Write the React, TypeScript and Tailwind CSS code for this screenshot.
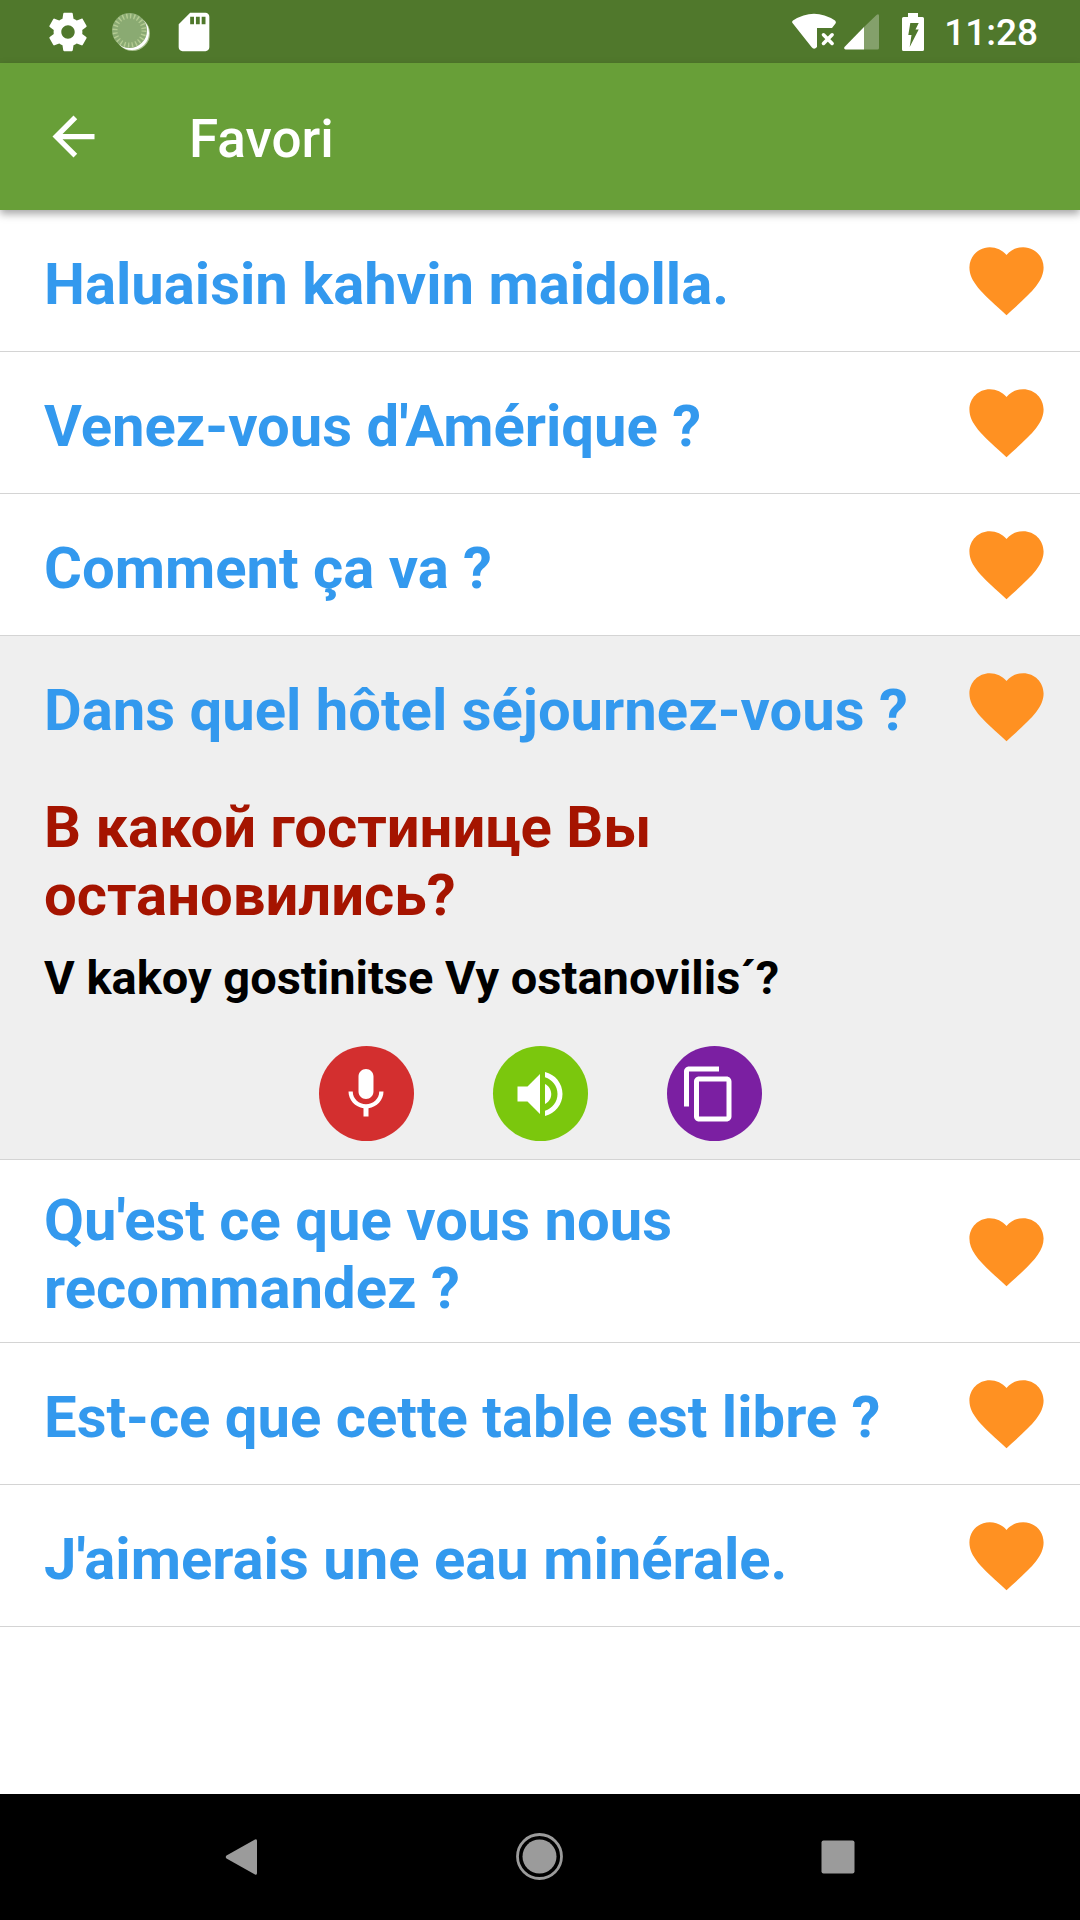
import { useState } from "react";
import type { ReactNode } from "react";

type Phrase = {
  id: number;
  text: string;
  translation?: string;
  pronunciation?: string;
};

const phrases: Phrase[] = [
  { id: 1, text: "Haluaisin kahvin maidolla." },
  { id: 2, text: "Venez-vous d'Amérique ?" },
  { id: 3, text: "Comment ça va ?" },
  {
    id: 4,
    text: "Dans quel hôtel séjournez-vous ?",
    translation: "В какой гостинице Вы остановились?",
    pronunciation: "V kakoy gostinitse Vy ostanovilis´?",
  },
  { id: 5, text: "Qu'est ce que vous nous recommandez ?" },
  { id: 6, text: "Est-ce que cette table est libre ?" },
  { id: 7, text: "J'aimerais une eau minérale." },
];

function Icon({ d, className, viewBox = "0 0 24 24" }: { d: string; className: string; viewBox?: string }) {
  return (
    <svg viewBox={viewBox} fill="currentColor" className={className} aria-hidden="true">
      <path d={d} />
    </svg>
  );
}

const paths = {
  gear: "M19.43 12.98c.04-.32.07-.64.07-.98s-.03-.66-.07-.98l2.11-1.65c.19-.15.24-.42.12-.64l-2-3.46c-.12-.22-.39-.3-.61-.22l-2.49 1c-.52-.4-1.08-.73-1.69-.98l-.38-2.65C14.46 2.18 14.25 2 14 2h-4c-.25 0-.46.18-.49.42l-.38 2.65c-.61.25-1.17.59-1.69.98l-2.49-1c-.23-.09-.49 0-.61.22l-2 3.46c-.13.22-.07.49.12.64l2.11 1.65c-.04.32-.07.65-.07.98s.03.66.07.98l-2.11 1.65c-.19.15-.24.42-.12.64l2 3.46c.12.22.39.3.61.22l2.49-1c.52.4 1.08.73 1.69.98l.38 2.65c.03.24.24.42.49.42h4c.25 0 .46-.18.49-.42l.38-2.65c.61-.25 1.17-.59 1.69-.98l2.49 1c.23.09.49 0 .61-.22l2-3.46c.12-.22.07-.49-.12-.64l-2.11-1.65zM12 15.5c-1.93 0-3.5-1.57-3.5-3.5s1.57-3.5 3.5-3.5 3.5 1.57 3.5 3.5-1.57 3.5-3.5 3.5z",
  sdCard: "M18 2h-8L4.02 8 4 20c0 1.1.9 2 2 2h12c1.1 0 2-.9 2-2V4c0-1.1-.9-2-2-2zm-6 6h-2V4h2v4zm3 0h-2V4h2v4zm3 0h-2V4h2v4z",
  back: "M20 11H7.83l5.59-5.59L12 4l-8 8 8 8 1.41-1.41L7.83 13H20v-2z",
  heart: "M12 21.35l-1.45-1.32C5.4 15.36 2 12.28 2 8.5 2 5.42 4.42 3 7.5 3c1.74 0 3.41.81 4.5 2.09C13.09 3.81 14.76 3 16.5 3 19.58 3 22 5.42 22 8.5c0 3.78-3.4 6.86-8.55 11.54L12 21.35z",
  mic: "M12 14c1.66 0 2.99-1.34 2.99-3L15 5c0-1.66-1.34-3-3-3S9 3.34 9 5v6c0 1.66 1.34 3 3 3zm5.3-3c0 3-2.54 5.1-5.3 5.1S6.7 14 6.7 11H5c0 3.41 2.72 6.23 6 6.72V21h2v-3.28c3.28-.48 6-3.3 6-6.72h-1.7z",
  volume: "M3 9v6h4l5 5V4L7 9H3zm13.5 3c0-1.77-1.02-3.29-2.5-4.03v8.05c1.48-.73 2.5-2.25 2.5-4.02zM14 3.23v2.06c2.89.86 5 3.54 5 6.71s-2.11 5.85-5 6.71v2.06c4.01-.91 7-4.49 7-8.77s-2.99-7.86-7-8.77z",
  copy: "M16 1H4c-1.1 0-2 .9-2 2v14h2V3h12V1zm3 4H8c-1.1 0-2 .9-2 2v14c0 1.1.9 2 2 2h11c1.1 0 2-.9 2-2V7c0-1.1-.9-2-2-2zm0 16H8V7h11v14z",
};

function Spinner() {
  return (
    <svg viewBox="0 0 46 46" className="size-[46px]" aria-hidden="true">
      <circle cx="24.5" cy="24.5" r="17.5" fill="#a9c08f" />
      <circle cx="23.8" cy="23.8" r="17.2" fill="#fff" />
      <circle cx="21.5" cy="21.5" r="17.5" fill="#8aaa72" />
      <circle cx="21.5" cy="21.5" r="14.5" fill="none" stroke="#b4cc92" strokeWidth="5" strokeDasharray="1.4 2.4" />
    </svg>
  );
}

function StatusBar() {
  return (
    <div className="flex h-[63px] items-center justify-between bg-[#50782c] pr-[42px] pl-[45px] text-white">
      <div className="flex gap-[17px]">
        <Icon d={paths.gear} className="size-[46px]" />
        <Spinner />
        <Icon d={paths.sdCard} className="size-[46px]" />
      </div>
      <div className="flex items-center">
        <svg viewBox="0 0 44 38" className="mr-2 h-[38px] w-11" aria-hidden="true">
          <path
            d="M1 7.500Q22-6 43 7.500Q44.500 9 43.500 10.500L40 15H25V34Q22 37.500 19.500 34L.5 10Q-.5 8.500 1 7.500Z"
            fill="currentColor"
          />
          <path d="M31.500 21.800l8.600 8.600m0-8.600l-8.600 8.600" stroke="currentColor" strokeWidth="3.600" strokeLinecap="round" />
        </svg>
        <svg viewBox="0 0 35 38" className="mr-[23px] h-[38px] w-[35px]" aria-hidden="true">
          <path d="M32.500 2Q35 0 35 3V35Q35 36.500 33.500 36.500H20V14Z" fill="#fff" fillOpacity="0.3" />
          <path d="M20 14V36.500H1.500Q-.5 36 .5 34Z" fill="#fff" />
        </svg>
        <svg viewBox="0 0 22 38" className="mr-5 h-[38px] w-[22px]" aria-hidden="true">
          <path
            fillRule="evenodd"
            d="M6 0H16V4H20.500Q22 4 22 5.500V36.500Q22 38 20.500 38H1.500Q0 38 0 36.500V5.500Q0 4 1.500 4H6ZM8.300 10L6.300 22H9.500L7.700 34L16.700 16.500H13.500L16.700 10Z"
            fill="currentColor"
          />
        </svg>
        <span className="pt-0.5 text-[37px] leading-none font-medium">11:28</span>
      </div>
    </div>
  );
}

function RoundButton({ label, className, children }: { label: string; className: string; children: ReactNode }) {
  return (
    <button
      type="button"
      aria-label={label}
      className={`flex size-[95px] items-center justify-center rounded-full text-white ${className}`}
    >
      {children}
    </button>
  );
}

type PhraseRowProps = {
  phrase: Phrase;
  open: boolean;
  onToggle: () => void;
};

function PhraseRow({ phrase, open, onToggle }: PhraseRowProps) {
  return (
    <li className={`border-b border-[#d4d4d4] pt-[26px] ${open ? "bg-[#efefef] pb-[18px]" : "pb-5"}`}>
      <div className="flex min-h-[95px] items-center pr-[29px] pl-11">
        <button
          type="button"
          aria-expanded={open}
          onClick={onToggle}
          className="min-w-0 flex-1 text-left text-[58px] leading-[68px] font-bold text-[#3399ee]"
        >
          {phrase.text}
        </button>
        <button type="button" aria-label="Favori" className="pb-1.5 text-[#ff9122]">
          <Icon d={paths.heart} className="size-[89px]" />
        </button>
      </div>

      {open && phrase.translation && (
        <div className="px-11 pt-9 font-bold">
          <p className="text-[58px] leading-[68px] text-[#a51400]">{phrase.translation}</p>
          <p className="mt-[21px] text-[47px] leading-[55px] text-black">{phrase.pronunciation}</p>
          <div className="mt-[41px] flex justify-center gap-[79px]">
            <RoundButton label="Microphone" className="bg-[#d32f2f]">
              <Icon d={paths.mic} className="size-[60px]" />
            </RoundButton>
            <RoundButton label="Écouter" className="bg-[#7bc70d]">
              <Icon d={paths.volume} className="size-[60px]" />
            </RoundButton>
            <RoundButton label="Copier" className="bg-[#7b1fa2]">
              <Icon d={paths.copy} viewBox="2 0 24 24" className="size-[60px]" />
            </RoundButton>
          </div>
        </div>
      )}
    </li>
  );
}

function NavBar() {
  return (
    <nav className="flex h-[126px] bg-black px-[93px] text-[#9b9b9b]">
      <button type="button" aria-label="Back" className="flex flex-1 items-center justify-center">
        <svg viewBox="0 0 48 48" className="size-12" aria-hidden="true">
          <path d="M37 6.500Q39 5.500 39 8V40Q39 42.500 37 41.500L8.500 25.500Q7 24 8.500 22.500Z" fill="currentColor" />
        </svg>
      </button>
      <button type="button" aria-label="Home" className="flex flex-1 items-center justify-center">
        <svg viewBox="0 0 48 48" className="size-12" aria-hidden="true">
          <circle cx="23.5" cy="23.5" r="22" fill="none" stroke="currentColor" strokeWidth="2.800" />
          <circle cx="23.5" cy="23.5" r="17" fill="currentColor" />
        </svg>
      </button>
      <button type="button" aria-label="Recent apps" className="flex flex-1 items-center justify-center">
        <svg viewBox="0 0 48 48" className="size-12" aria-hidden="true">
          <rect x="7.500" y="7.500" width="33" height="33" rx="2" fill="currentColor" />
        </svg>
      </button>
    </nav>
  );
}

export default function App() {
  const [openId, setOpenId] = useState<number | null>(4);

  return (
    <div className="flex min-h-screen flex-col bg-white font-['Roboto',sans-serif]">
      <StatusBar />
      <header className="relative z-10 flex h-[147px] items-center gap-[84px] bg-[#689f38] px-[42px] text-white shadow-[0_4px_8px_rgba(0,0,0,0.35)]">
        <button type="button" aria-label="Retour">
          <Icon d={paths.back} className="size-[63px]" />
        </button>
        <h1 className="pt-1 text-[53px] leading-[62px] font-medium">Favori</h1>
      </header>
      <main className="flex-1">
        <ul>
          {phrases.map((phrase) => (
            <PhraseRow
              key={phrase.id}
              phrase={phrase}
              open={openId === phrase.id}
              onToggle={() => setOpenId(openId === phrase.id ? null : phrase.id)}
            />
          ))}
        </ul>
      </main>
      <NavBar />
    </div>
  );
}
